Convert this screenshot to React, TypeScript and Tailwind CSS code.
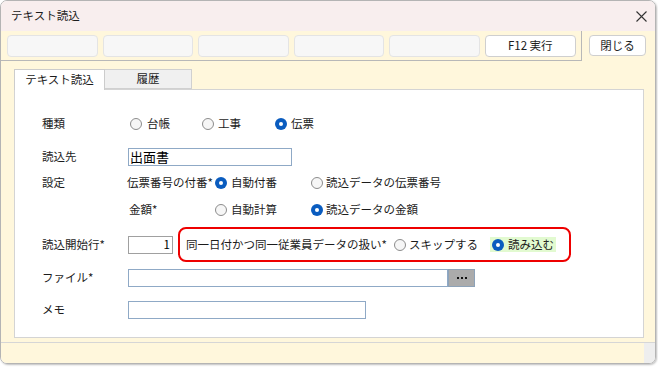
import React from "react";

const FONT = "font-['Meiryo_UI','Noto_Sans_CJK_JP',sans-serif]";

function Radio({ checked }: { checked?: boolean }) {
  if (checked) {
    return (
      <span className="w-[12px] h-[12px] shrink-0 rounded-full bg-[#0a5cbf] flex items-center justify-center">
        <span className="w-[4px] h-[4px] rounded-full bg-white" />
      </span>
    );
  }
  return <span className="w-[12px] h-[12px] shrink-0 rounded-full border border-[#8c8c8c] bg-[#f6f6f6]" />;
}

function Opt({ label, checked, w, gap = "gap-[5px]" }: { label: string; checked?: boolean; w: string; gap?: string }) {
  return (
    <div className={`flex items-center whitespace-nowrap ${gap} ${w}`}>
      <Radio checked={checked} />
      <span>{label}</span>
    </div>
  );
}

export default function App() {
  return (
    <div className={`w-[658px] h-[367px] bg-white ${FONT} text-[11.5px] text-[#1c1c1c]`}>
      <div className="w-[656px] h-[364px] border border-[#b4b4b4] rounded-[7px] overflow-hidden flex flex-col shadow-[1px_1px_2px_rgba(0,0,0,0.25)]">
        {/* Title bar */}
        <div className="h-[30px] bg-[#f8eeee] flex items-center justify-between pl-[10px] pr-[8px] shrink-0">
          <span>テキスト読込</span>
          <svg width="11" height="11" viewBox="0 0 11 11">
            <path d="M0.5 0.5 L10.5 10.5 M10.5 0.5 L0.5 10.5" stroke="#333" strokeWidth="1.1" fill="none" />
          </svg>
        </div>
        {/* Toolbar */}
        <div className="h-[30px] bg-[#fff7dc] flex shrink-0">
          <div className="w-[581px] h-[30px] border-r border-b border-[#b8b8b8] flex gap-[5px] pl-[6px] pt-[4px]">
            {[0, 1, 2, 3, 4].map((i) => (
              <div key={i} className="w-[90.6px] h-[22px] bg-[#f7f7f7] border border-[#e4e4e4] rounded-[4px]" />
            ))}
            <div className="w-[90.6px] h-[22px] bg-white border border-[#cfcfcf] rounded-[4px] flex items-center justify-center">
              F12 実行
            </div>
          </div>
          <div className="pl-[7px] pt-[4px]">
            <div className="w-[57px] h-[21px] bg-white border border-[#cfcfcf] rounded-[4px] flex items-center justify-center">
              閉じる
            </div>
          </div>
        </div>
        {/* Body */}
        <div className="h-[281px] bg-[#fff7dc] pl-[13px] pr-[11px] pt-[8px] pb-[4px] flex flex-col shrink-0">
          <div className="flex h-[20px] shrink-0">
            <div className="relative z-10 w-[91px] h-[21px] bg-white border border-b-0 border-[#cccccc] flex items-center justify-center">
              テキスト読込
            </div>
            <div className="w-[87px] h-[20px] bg-[#f0f0f0] border border-l-0 border-[#d0d0d0] flex items-center justify-center">
              履歴
            </div>
          </div>
          <div className="flex-1 bg-white border border-[#d4d4d4] pl-[27px] flex flex-col">
            {/* 種類 */}
            <div className="mt-[24px] h-[20px] flex items-center">
              <div className="w-[86px]">種類</div>
              <div className="flex items-center ml-[2px]">
                <Opt label="台帳" w="w-[72px]" />
                <Opt label="工事" w="w-[73px]" gap="gap-[4px]" />
                <Opt label="伝票" checked w="w-[80px]" gap="gap-[4px]" />
              </div>
            </div>
            {/* 読込先 */}
            <div className="mt-[14px] h-[18px] flex items-center">
              <div className="w-[86px]">読込先</div>
              <div className="w-[164px] h-[18px] border border-[#8fa9c6] flex items-center pl-[1px] text-[13px] text-black">
                出面書
              </div>
            </div>
            {/* 設定 */}
            <div className="mt-[7px] h-[20px] flex items-center">
              <div className="w-[86px]">設定</div>
              <div className="w-[87px] -ml-[1px] mr-[1px] whitespace-nowrap">伝票番号の付番*</div>
              <Opt label="自動付番" checked w="w-[96px]" gap="gap-[4px]" />
              <Opt label="読込データの伝票番号" w="w-[140px]" gap="gap-[3px]" />
            </div>
            <div className="mt-[7px] h-[20px] flex items-center">
              <div className="w-[86px]" />
              <div className="w-[87px] pl-[1px] whitespace-nowrap">金額*</div>
              <Opt label="自動計算" w="w-[96px]" gap="gap-[4px]" />
              <Opt label="読込データの金額" checked w="w-[140px]" gap="gap-[3px]" />
            </div>
            {/* 読込開始行 */}
            <div className="mt-[7px] h-[35px] flex items-center">
              <div className="w-[86px] whitespace-nowrap">読込開始行*</div>
              <div className="w-[45px] h-[18px] border border-[#a0a0a0] flex items-center justify-end pr-[2px] text-black">1</div>
              <div className="ml-[5px] w-[393px] h-[35px] border-2 border-[#ee0000] rounded-[8px] flex items-center pl-[6px]">
                <div className="w-[208px] whitespace-nowrap">同一日付かつ同一従業員データの扱い*</div>
                <Opt label="スキップする" w="w-[96px]" gap="gap-[3px]" />
                <div className="w-[66px] h-[15px] bg-[#e2fad0] flex items-center gap-[4px] pl-[2px] whitespace-nowrap">
                  <Radio checked />
                  <span>読み込む</span>
                </div>
              </div>
            </div>
            {/* ファイル */}
            <div className="mt-[7px] h-[18px] flex items-center">
              <div className="w-[86px]">ファイル*</div>
              <div className="w-[320px] h-[18px] border border-[#8fa9c6]" />
              <div className="w-[27px] h-[18px] bg-[#ababab] border border-[#8da2b8] flex items-center justify-center">
                <svg width="10" height="2" viewBox="0 0 10 2">
                  <rect x="0" y="0" width="2" height="2" fill="#111" />
                  <rect x="4" y="0" width="2" height="2" fill="#111" />
                  <rect x="8" y="0" width="2" height="2" fill="#111" />
                </svg>
              </div>
            </div>
            {/* メモ */}
            <div className="mt-[14px] h-[18px] flex items-center">
              <div className="w-[86px]">メモ</div>
              <div className="w-[238px] h-[18px] border border-[#8fa9c6]" />
            </div>
          </div>
        </div>
        {/* Status bar */}
        <div className="h-[21px] border-t border-[#d6d6d6] flex shrink-0">
          <div className="flex-1 bg-[#fff7dc]" />
          <div className="w-[11px] bg-[#eeeeee]" />
        </div>
      </div>
    </div>
  );
}
